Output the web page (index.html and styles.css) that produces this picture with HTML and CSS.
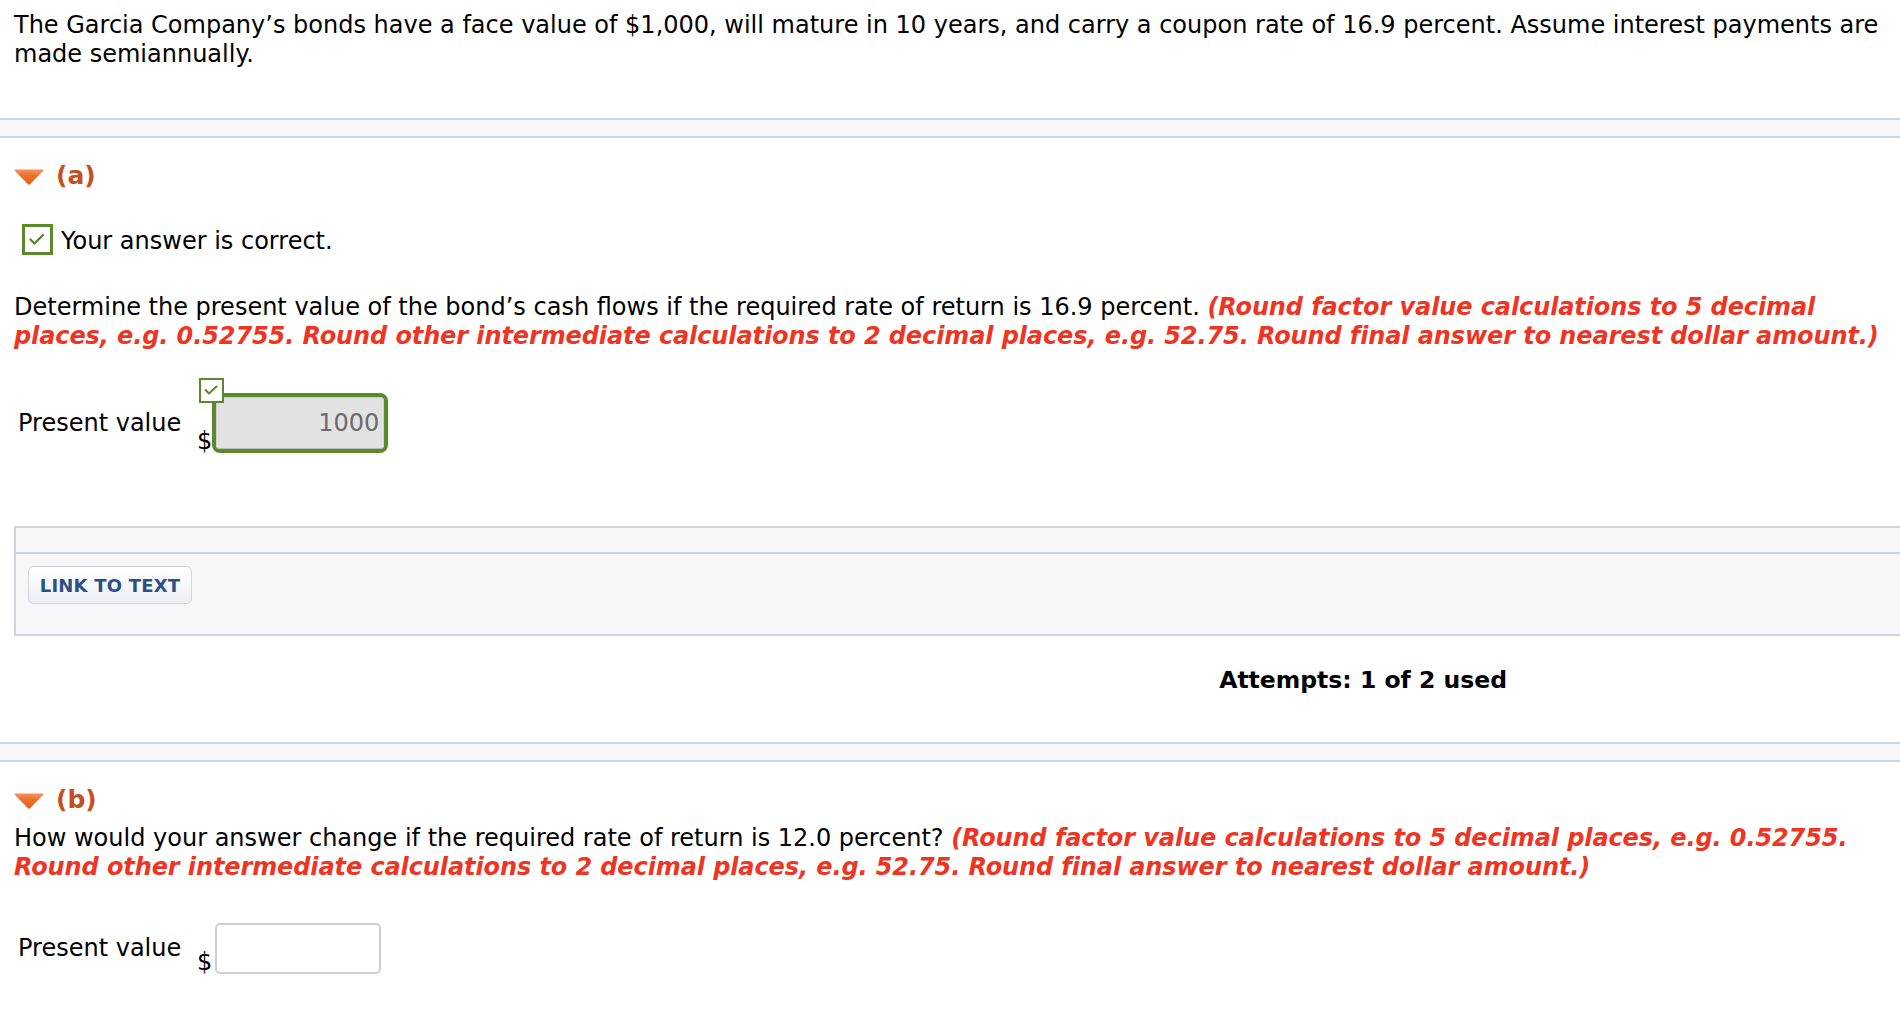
FILE: index.html
```html
<!DOCTYPE html>
<html lang="en">
<head>
<meta charset="utf-8">
<title>Bond valuation</title>
<link rel="stylesheet" href="styles.css">
</head>
<body>
<p class="intro">The Garcia Company’s bonds have a face value of $1,000, will mature in 10 years, and carry a coupon rate of 16.9 percent. Assume interest payments are made semiannually.</p>

<div class="band"></div>

<section class="part">
  <h2 class="part-head"><svg class="caret" viewBox="0 0 30 16" aria-hidden="true"><defs><linearGradient id="cg-a" x1="0" y1="0" x2="0" y2="1"><stop offset="0" stop-color="#f7935a"/><stop offset="0.35" stop-color="#f3722f"/><stop offset="1" stop-color="#e85a1e"/></linearGradient></defs><path d="M1.6 0.5 H28.4 Q30 0.5 29 1.9 L16.3 15.1 Q15 16.4 13.7 15.1 L1 1.9 Q0 0.5 1.6 0.5 Z" fill="url(#cg-a)"/></svg>(a)</h2>

  <div class="status">
    <span class="status-box"><svg width="25" height="25" viewBox="0 0 25 25" aria-hidden="true"><polyline points="5.5,12.5 9.5,16.5 18,8" fill="none" stroke="#5c8a2a" stroke-width="2.4" stroke-linecap="round" stroke-linejoin="round"/></svg></span>
    <span class="status-text">Your answer is correct.</span>
  </div>

  <p class="question">Determine the present value of the bond’s cash flows if the required rate of return is 16.9 percent. <em class="hint">(Round factor value calculations to 5 decimal places, e.g. 0.52755. Round other intermediate calculations to 2 decimal places, e.g. 52.75. Round final answer to nearest dollar amount.)</em></p>

  <div class="pv-row pv-row-a">
    <span class="pv-label">Present value</span>
    <span class="dollar">$</span>
    <span class="answer-wrap">
      <span class="mini-check"><svg width="21" height="21" viewBox="0 0 21 21" aria-hidden="true"><polyline points="4.5,10 8,13.5 15.5,6.5" fill="none" stroke="#5c8a2a" stroke-width="2" stroke-linecap="round" stroke-linejoin="round"/></svg></span>
      <input class="answer answer-filled" type="text" value="1000" readonly>
    </span>
  </div>

  <div class="resource-panel">
    <div class="resource-head"></div>
    <div class="resource-body"><button class="link-btn" type="button">LINK TO TEXT</button></div>
  </div>

  <div class="attempts">Attempts: 1 of 2 used</div>
</section>

<div class="band band-mid"></div>

<section class="part">
  <h2 class="part-head"><svg class="caret" viewBox="0 0 30 16" aria-hidden="true"><defs><linearGradient id="cg-b" x1="0" y1="0" x2="0" y2="1"><stop offset="0" stop-color="#f7935a"/><stop offset="0.35" stop-color="#f3722f"/><stop offset="1" stop-color="#e85a1e"/></linearGradient></defs><path d="M1.6 0.5 H28.4 Q30 0.5 29 1.9 L16.3 15.1 Q15 16.4 13.7 15.1 L1 1.9 Q0 0.5 1.6 0.5 Z" fill="url(#cg-b)"/></svg>(b)</h2>

  <p class="question question-b">How would your answer change if the required rate of return is 12.0 percent? <em class="hint">(Round factor value calculations to 5 decimal places, e.g. 0.52755. Round other intermediate calculations to 2 decimal places, e.g. 52.75. Round final answer to nearest dollar amount.)</em></p>

  <div class="pv-row pv-row-b">
    <span class="pv-label">Present value</span>
    <span class="dollar">$</span>
    <input class="answer answer-empty" type="text" value="">
  </div>
</section>
</body>
</html>
```

FILE: styles.css
```css
html, body {
  overflow-x: hidden;
}

body {
  margin: 0;
  background: #ffffff;
  color: #000000;
  font-family: "DejaVu Sans", Verdana, sans-serif;
  font-size: 24px;
  line-height: 29px;
}

.intro {
  margin: 0;
  padding: 11px 6px 0 14px;
}

.band {
  margin-top: 49px;
  height: 16px;
  background: #f6f7f9;
  border-top: 2px solid #ccd4de;
  border-bottom: 2px solid #ccd4de;
}

.band-mid {
  margin-top: 47px;
}

.part-head {
  margin: 0;
  padding: 23px 0 0 14px;
  font-size: 25px;
  line-height: 29px;
  font-weight: bold;
  color: #c4501f;
}

.caret {
  display: inline-block;
  width: 30px;
  height: 16px;
  margin-right: 12px;
  vertical-align: -1px;
}

.status {
  display: flex;
  align-items: flex-start;
  gap: 8px;
  margin-top: 34px;
  padding-left: 22px;
}

.status-box {
  box-sizing: border-box;
  width: 31px;
  height: 31px;
  border: 3px solid #5c8a2a;
  background: #ffffff;
  display: flex;
  align-items: center;
  justify-content: center;
}

.status-box svg {
  display: block;
}

.status-text {
  margin-top: 3px;
}

.question {
  margin: 37px 0 0;
  padding: 0 0 0 14px;
}

.question-b {
  margin-top: 10px;
}

.hint {
  font-weight: bold;
  font-style: italic;
  color: #ee3524;
  letter-spacing: -0.1px;
}

.pv-row {
  display: flex;
  align-items: center;
  margin-top: 42px;
  padding-left: 14px;
}

.pv-row-b {
  margin-top: 41px;
}

.pv-label {
  flex: 0 0 183px;
  box-sizing: border-box;
  padding-left: 4px;
}

.dollar {
  flex: 0 0 15px;
  align-self: flex-end;
  margin-bottom: -3px;
}

.answer-wrap {
  position: relative;
  display: flex;
  border: 4px solid #5c8a2a;
  border-radius: 8px;
  background: #e2e2e2;
}

.answer {
  box-sizing: border-box;
  margin: 0;
  font-family: "DejaVu Sans", Verdana, sans-serif;
  font-size: 24px;
  text-align: right;
  outline: none;
}

.answer-filled {
  width: 168px;
  height: 52px;
  padding: 0 4px 0 4px;
  border: 1px solid #d0d0d0;
  border-bottom-color: #bcbcbc;
  border-radius: 4px;
  background: #e2e2e2;
  color: #6b6b6b;
}

.answer-empty {
  width: 166px;
  height: 51px;
  margin-left: 3px;
  padding: 0 4px;
  border: 2px solid #cfcfcf;
  border-radius: 5px;
  background: #ffffff;
  color: #000000;
}

.mini-check {
  position: absolute;
  left: -17px;
  top: -19px;
  z-index: 1;
  box-sizing: border-box;
  width: 25px;
  height: 25px;
  border: 2px solid #5c8a2a;
  background: #ffffff;
}

.mini-check svg {
  display: block;
}

.resource-panel {
  margin: 73px -2px 0 14px;
  border: 2px solid #ccd4de;
  background: #f6f7f9;
}

.resource-head {
  height: 24px;
  border-bottom: 2px solid #ccd4de;
}

.resource-body {
  box-sizing: border-box;
  height: 80px;
  padding: 12px 0 0 12px;
}

.link-btn {
  box-sizing: border-box;
  width: 164px;
  height: 38px;
  padding: 0;
  border: 1px solid #cfd6df;
  border-radius: 5px;
  background: linear-gradient(#ffffff, #eceff3);
  color: #2b4f86;
  font-family: "DejaVu Sans", Verdana, sans-serif;
  font-size: 18px;
  font-weight: bold;
  letter-spacing: 0.2px;
  cursor: pointer;
}

.attempts {
  margin-top: 30px;
  padding-right: 393px;
  text-align: right;
  font-size: 23.5px;
  line-height: 29px;
  font-weight: bold;
}
```
